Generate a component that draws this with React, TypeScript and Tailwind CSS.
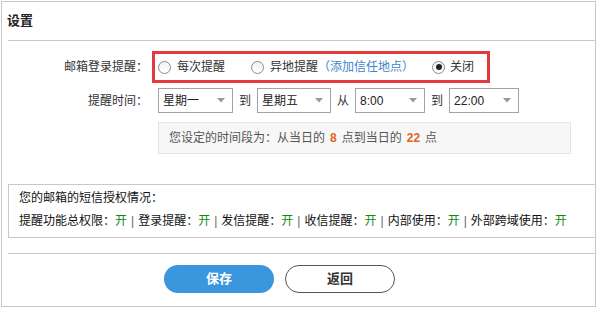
import React from 'react';

// 设置 — 登录提醒 panel

const Radio = ({ checked = false }: { checked?: boolean }) => (
  <span className="w-[13px] h-[13px] rounded-full border border-[#8a8a8a] bg-gradient-to-b from-[#f2f2f2] to-white flex items-center justify-center shrink-0">
    {checked && <span className="w-[6px] h-[6px] rounded-full bg-[#222]" />}
  </span>
);

const Select = ({ value, width }: { value: string; width: string }) => (
  <div
    className={`${width} h-[25px] border border-[#a3a3a3] bg-white flex items-center justify-between pl-[4px] pr-[7px] text-[12px] text-[#222]`}
  >
    <span>{value}</span>
    <svg width="8" height="5" viewBox="0 0 8 5">
      <polygon points="0,0 8,0 4,4.5" fill="#9a9a9a" />
    </svg>
  </div>
);

const perms: { label: string; value: string }[] = [
  { label: '提醒功能总权限：', value: '开' },
  { label: '登录提醒：', value: '开' },
  { label: '发信提醒：', value: '开' },
  { label: '收信提醒：', value: '开' },
  { label: '内部使用：', value: '开' },
  { label: '外部跨域使用：', value: '开' },
];

const App = () => {
  return (
    <div className="w-[598px] h-[312px] bg-white font-['Liberation_Sans','Noto_Sans_CJK_SC',sans-serif] text-[#333]">
      <div className="ml-[1px] mt-[1px] w-[595px] h-[306px] border border-[#c8c8c8] flex flex-col">
        <div className="h-[38px] pl-[5px] flex items-center text-[13px] font-bold text-[#222]">
          设置
        </div>
        <div className="ml-[6px] border-t border-[#c8c8c8]" />

        {/* login reminder */}
        <div className="mt-[10px] flex items-center text-[12px]">
          <div className="w-[146px] text-right">邮箱登录提醒：</div>
          <div className="ml-[4px] w-[338px] h-[32px] border-[3px] border-[#e23b3e] flex items-center pl-[3px]">
            <label className="flex items-center gap-[6px]">
              <Radio />
              <span>每次提醒</span>
            </label>
            <label className="ml-[26px] flex items-center gap-[6px]">
              <Radio />
              <span>
                异地提醒<span className="text-[#3f86c7]">（添加信任地点）</span>
              </span>
            </label>
            <label className="ml-[18px] flex items-center gap-[5px]">
              <Radio checked />
              <span>关闭</span>
            </label>
          </div>
        </div>

        {/* time range */}
        <div className="mt-[5px] flex items-center text-[12px]">
          <div className="w-[146px] text-right">提醒时间：</div>
          <div className="ml-[10px] flex items-center">
            <Select value="星期一" width="w-[75px]" />
            <span className="mx-[6px]">到</span>
            <Select value="星期五" width="w-[74px]" />
            <span className="mx-[6px]">从</span>
            <Select value="8:00" width="w-[70px]" />
            <span className="mx-[6px]">到</span>
            <Select value="22:00" width="w-[70px]" />
          </div>
        </div>

        <div className="mt-[9px] ml-[156px] w-[413px] h-[32px] bg-[#f7f7f7] border border-[#e4e4e4] pl-[10px] flex items-center text-[12px] text-[#555]">
          您设定的时间段为：从当日的
          <b className="mx-[5px] text-[#e0661f]">8</b>
          点到当日的
          <b className="mx-[5px] text-[#e0661f]">22</b>
          点
        </div>

        {/* sms authorization */}
        <div className="mt-[30px] ml-[6px] border-t border-l border-b border-[#c8c8c8] pl-[10px] pt-[2px] pb-[4px] text-[12px] leading-[23px] text-[#111]">
          <div>您的邮箱的短信授权情况：</div>
          <div className="flex items-center">
            {perms.map((p, i) => (
              <React.Fragment key={p.label}>
                {i > 0 && <span className="mx-[4px] text-[#666]">|</span>}
                <span>{p.label}</span>
                <span className="text-[#128a12]">{p.value}</span>
              </React.Fragment>
            ))}
          </div>
        </div>

        <div className="mt-[15px] ml-[6px] border-t border-[#c8c8c8]" />

        <div className="mt-[11px] ml-[162px] flex gap-[11px]">
          <button className="w-[110px] h-[28px] rounded-full bg-[#3a96dd] text-white text-[13px] font-bold">
            保存
          </button>
          <button className="w-[110px] h-[28px] rounded-full border border-[#555] bg-white text-[#333] text-[13px] font-bold">
            返回
          </button>
        </div>
      </div>
    </div>
  );
};

export default App;
